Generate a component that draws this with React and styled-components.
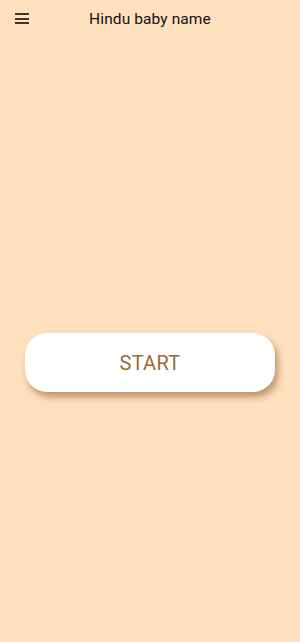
import React from "react";
import styled, { createGlobalStyle } from "styled-components";

const Global = createGlobalStyle`
  html, body {
    margin: 0;
    padding: 0;
    background: #ffe0bf;
  }
  body {
    font-family: Roboto, "Liberation Sans", sans-serif;
  }
`;

const Page = styled.div`
  width: 300px;
  height: 642px;
  background: #ffe0bf;
  display: flex;
  flex-direction: column;
`;

const TopBar = styled.header`
  height: 38px;
  display: flex;
  align-items: center;
  padding: 0 15px;
`;

const MenuButton = styled.button`
  width: 14px;
  height: 11px;
  padding: 0;
  border: none;
  background: none;
  display: flex;
  flex-direction: column;
  justify-content: space-between;
  margin-top: -1px;
  span {
    display: block;
    height: 2px;
    background: #3a342e;
  }
`;

const Title = styled.h1`
  flex: 1;
  margin: 0 14px 0 0;
  text-align: center;
  font-size: 15.5px;
  font-weight: 400;
  color: #111;
  letter-spacing: 0.1px;
`;

const Body = styled.main`
  flex: 1;
  display: flex;
  align-items: flex-start;
  justify-content: center;
  padding-top: 295px;
`;

const StartButton = styled.button`
  width: 250px;
  height: 59px;
  border: none;
  border-radius: 22px;
  background: #fff;
  color: #9a6b35;
  font-family: Roboto, "Liberation Sans", sans-serif;
  font-size: 20px;
  letter-spacing: 0.3px;
  box-shadow: 3px 5px 7px rgba(150, 95, 40, 0.6);
`;

export default function App() {
  return (
    <Page>
      <Global />
      <TopBar>
        <MenuButton aria-label="menu">
          <span />
          <span />
          <span />
        </MenuButton>
        <Title>Hindu baby name</Title>
      </TopBar>
      <Body>
        <StartButton>START</StartButton>
      </Body>
    </Page>
  );
}
